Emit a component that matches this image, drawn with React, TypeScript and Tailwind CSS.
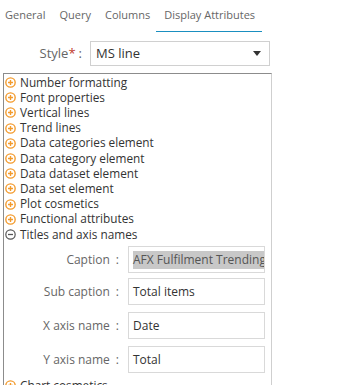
import React from "react";

const items = [
  "Number formatting",
  "Font properties",
  "Vertical lines",
  "Trend lines",
  "Data categories element",
  "Data category element",
  "Data dataset element",
  "Data set element",
  "Plot cosmetics",
  "Functional attributes",
];

function Plus() {
  return (
    <svg width="11" height="11" viewBox="0 0 12 12" className="shrink-0">
      <circle cx="6" cy="6" r="5.1" fill="none" stroke="#f39a2b" strokeWidth="1.5" />
      <path d="M3.3 6h5.4M6 3.3v5.4" stroke="#f39a2b" strokeWidth="1.5" />
    </svg>
  );
}
function Minus() {
  return (
    <svg width="11" height="11" viewBox="0 0 12 12" className="shrink-0">
      <circle cx="6" cy="6" r="5.1" fill="none" stroke="#555" strokeWidth="1.3" />
      <path d="M3.3 6h5.4" stroke="#555" strokeWidth="1.4" />
    </svg>
  );
}

function Field({ label, value, selected }: { label: string; value: string; selected?: boolean }) {
  return (
    <div className="flex items-center h-[27px]">
      <div className="w-[124px] flex justify-end pr-[9px] text-[12px] text-[#666] whitespace-nowrap">
        <span>{label}</span>
        <span className="ml-[6px]">:</span>
      </div>
      <div className="w-[137px] h-[27px] border border-[#d9d9d9] flex items-center pl-[4px] overflow-hidden whitespace-nowrap text-[12px] text-[#333]">
        <span className={selected ? "bg-[#c8c8c8] text-[#555]" : ""}>{value}</span>
      </div>
    </div>
  );
}

export default function App() {
  return (
    <div className="w-[340px] h-[385px] overflow-hidden bg-white" style={{ fontFamily: "'Open Sans', sans-serif" }}>
      <div className="flex text-[11px] text-[#666] pl-[5px] h-[32px] whitespace-nowrap">
        <div className="pt-[7px] mr-[14px]">General</div>
        <div className="pt-[7px] mr-[14px]">Query</div>
        <div className="pt-[7px] mr-[6px]">Columns</div>
        <div className="pt-[7px] px-[8px] border-b-[1.5px] border-[#1a8fc0] w-[106px]">Display Attributes</div>
      </div>
      <div className="flex items-center mt-[9px] h-[25px]">
        <div className="w-[82px] text-right text-[13px] text-[#666]">
          Style<span className="text-[#c0392b]">*</span>
          <span className="ml-[3px]">:</span>
        </div>
        <div className="ml-[8px] w-[180px] h-[25px] border border-[#d0d0d0] flex items-center justify-between pl-[5px] pr-[8px] text-[13px] text-[#333]">
          <span>MS line</span>
          <svg width="8" height="5" viewBox="0 0 8 5"><path d="M0 0h8L4 5z" fill="#333" /></svg>
        </div>
      </div>
      <div className="ml-[3px] mt-[7px] w-[269px] h-[320px] border-l border-t border-[#8c8c8c] border-r border-r-[#cfcfcf] pt-[1px]">
        {items.map((t) => (
          <div key={t} className="flex items-center h-[15.2px] gap-[4px] pl-[1px] text-[11.8px] text-[#333] leading-none whitespace-nowrap">
            <Plus />
            <span>{t}</span>
          </div>
        ))}
        <div className="flex items-center h-[15.2px] gap-[4px] pl-[1px] text-[11.8px] text-[#333] leading-none whitespace-nowrap">
          <Minus />
          <span>Titles and axis names</span>
        </div>
        <div className="mt-[4px]">
          <Field label="Caption" value="AFX Fulfilment Trending" selected />
          <div className="h-[5px]" />
          <Field label="Sub caption" value="Total items" />
          <div className="h-[7px]" />
          <Field label="X axis name" value="Date" />
          <div className="h-[7px]" />
          <Field label="Y axis name" value="Total" />
        </div>
        <div className="flex items-center h-[15px] gap-[4px] pl-[1px] mt-[5px] text-[11.8px] text-[#333] leading-none whitespace-nowrap">
          <Plus />
          <span>Chart cosmetics</span>
        </div>
      </div>
    </div>
  );
}
